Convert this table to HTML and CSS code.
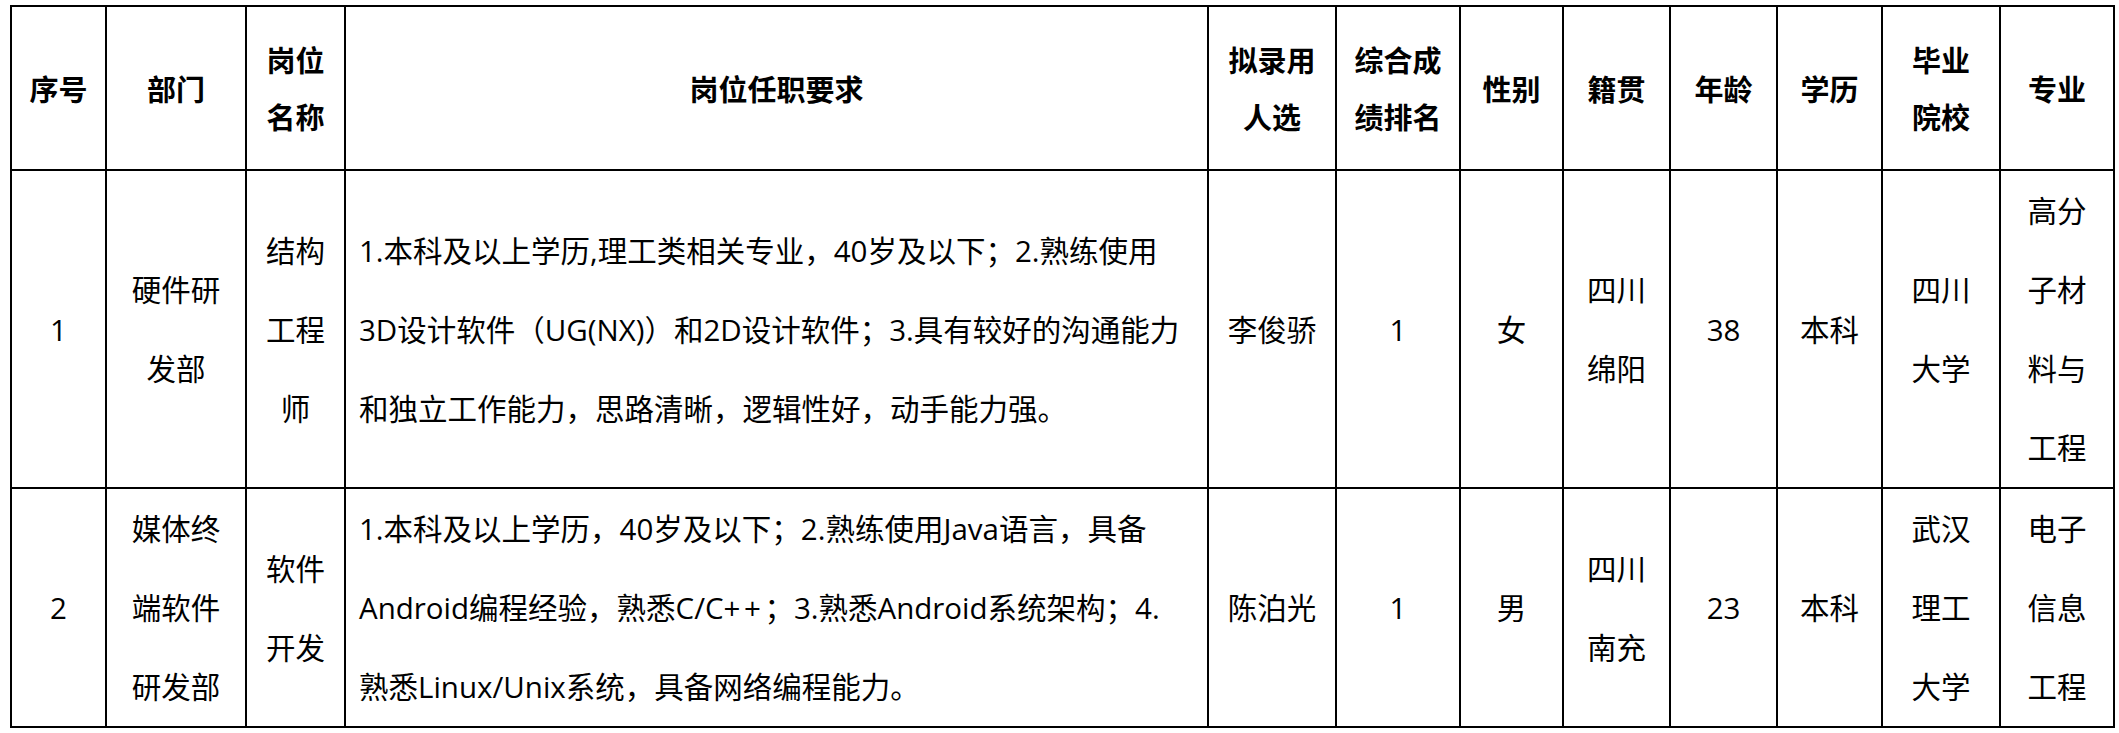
FILE: index.html
```html
<!DOCTYPE html>
<html lang="zh-CN">
<head>
<meta charset="utf-8">
<title>拟录用人员名单</title>
<link rel="stylesheet" href="styles.css">
</head>
<body>
<table class="grid">
  <colgroup>
    <col class="c-no">
    <col class="c-dept">
    <col class="c-post">
    <col class="c-req">
    <col class="c-name">
    <col class="c-rank">
    <col class="c-sex">
    <col class="c-origin">
    <col class="c-age">
    <col class="c-edu">
    <col class="c-school">
    <col class="c-major">
  </colgroup>
  <thead>
    <tr class="head-row">
      <th>序号</th>
      <th>部门</th>
      <th>岗位<br>名称</th>
      <th>岗位任职要求</th>
      <th>拟录用<br>人选</th>
      <th>综合成<br>绩排名</th>
      <th>性别</th>
      <th>籍贯</th>
      <th>年龄</th>
      <th>学历</th>
      <th>毕业<br>院校</th>
      <th>专业</th>
    </tr>
  </thead>
  <tbody>
    <tr class="row-a">
      <td>1</td>
      <td>硬件研<br>发部</td>
      <td>结构<br>工程<br>师</td>
      <td class="req">1.本科及以上学历,理工类相关专业，40岁及以下；2.熟练使用<br>3D设计软件（UG(NX)）和2D设计软件；3.具有较好的沟通能力<br>和独立工作能力，思路清晰，逻辑性好，动手能力强。</td>
      <td>李俊骄</td>
      <td>1</td>
      <td>女</td>
      <td>四川<br>绵阳</td>
      <td>38</td>
      <td>本科</td>
      <td>四川<br>大学</td>
      <td>高分<br>子材<br>料与<br>工程</td>
    </tr>
    <tr class="row-b">
      <td>2</td>
      <td>媒体终<br>端软件<br>研发部</td>
      <td>软件<br>开发</td>
      <td class="req">1.本科及以上学历，40岁及以下；2.熟练使用Java语言，具备<br>Android编程经验，熟悉C/C<span class="plus">++</span>；3.熟悉Android系统架构；4.<br>熟悉Linux/Unix系统，具备网络编程能力。</td>
      <td>陈泊光</td>
      <td>1</td>
      <td>男</td>
      <td>四川<br>南充</td>
      <td>23</td>
      <td>本科</td>
      <td>武汉<br>理工<br>大学</td>
      <td>电子<br>信息<br>工程</td>
    </tr>
  </tbody>
</table>
</body>
</html>
```

FILE: styles.css
```css
html, body {
  margin: 0;
  padding: 0;
  background: #ffffff;
}

body {
  padding: 5px 0 0 10px;
  font-family: "Open Sans", "Noto Sans CJK SC", sans-serif;
  color: #000000;
}

.grid {
  table-layout: fixed;
  width: 2105px;
  border-collapse: separate;
  border-spacing: 0;
  border-left: 2px solid #000;
  border-top: 2px solid #000;
}

.c-no { width: 95px; }
.c-dept { width: 140px; }
.c-post { width: 99px; }
.c-req { width: 863px; }
.c-name { width: 128px; }
.c-rank { width: 124px; }
.c-sex { width: 103px; }
.c-origin { width: 107px; }
.c-age { width: 107px; }
.c-edu { width: 105px; }
.c-school { width: 118px; }
.c-major { width: 114px; }

.grid th,
.grid td {
  box-sizing: border-box;
  border-right: 2px solid #000;
  border-bottom: 2px solid #000;
  padding: 0;
  text-align: center;
  vertical-align: middle;
  white-space: nowrap;
  overflow: hidden;
}

.grid th {
  font-family: "Noto Sans CJK SC", sans-serif;
  font-size: 29px;
  font-weight: 700;
  line-height: 57px;
}

.grid td {
  font-size: 29.5px;
  font-weight: 400;
  line-height: 79px;
}

.grid td.req {
  text-align: left;
  padding: 0 8px 0 13px;
}

.plus {
  letter-spacing: 0.12em;
}

.head-row { height: 164px; }
.row-a { height: 317px; }
.row-b { height: 238px; }
```
